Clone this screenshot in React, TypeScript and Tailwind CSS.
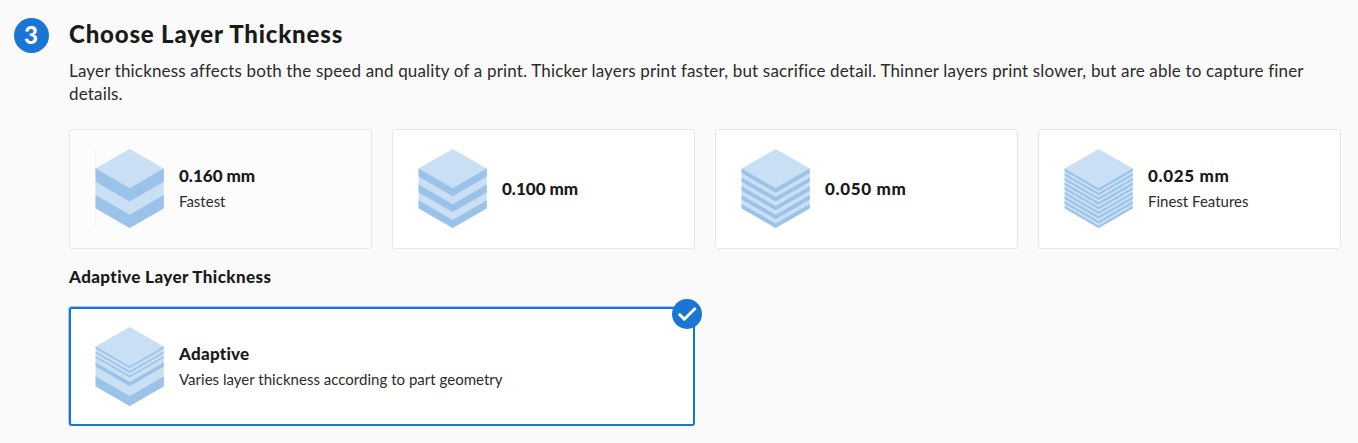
import React from "react";

type Band = [number, number];

function LayerIcon({ bands, edge = false }: { bands: Band[]; edge?: boolean }) {
  return (
    <svg width="70" height="80" viewBox="0 0 70 80" className="shrink-0" aria-hidden="true">
      {edge && <path d="M0 0 H0.8 V79 H0 Z" fill="#f1f1f1" />}
      <path d="M34.7 0 L68.8 19.6 V59.4 L34.7 79 L0.6 59.4 V19.6 Z" fill="#c9dff3" />
      {bands.map(([a, b]) => (
        <path
          key={a}
          fill="#9bc3ea"
          d={`M0.6 ${19.6 + a} L34.7 ${39.3 + a} L68.8 ${19.6 + a} V${19.6 + b} L34.7 ${39.3 + b} L0.6 ${19.6 + b} Z`}
        />
      ))}
    </svg>
  );
}

function evenBands(dark: number): Band[] {
  const step = 39.7 / (dark * 2 - 1);
  return Array.from({ length: dark }, (_, i): Band => [i * 2 * step, (i * 2 + 1) * step]);
}

const options = [
  { label: "0.160 mm", note: "Fastest", bands: evenBands(2), labelClass: "tracking-normal", card: "bg-[#fcfcfc]" },
  { label: "0.100 mm", note: "", bands: evenBands(3), labelClass: "tracking-normal", card: "bg-white" },
  { label: "0.050 mm", note: "", bands: evenBands(5), labelClass: "tracking-[0.65px]", card: "bg-white" },
  { label: "0.025 mm", note: "Finest Features", bands: evenBands(9), labelClass: "tracking-[0.65px]", card: "bg-white" },
];

const adaptiveBands: Band[] = [[0, 1.8], [4.8, 6.6], [9.4, 11.2], [15.8, 20], [29.8, 39.7]];

export default function App() {
  return (
    <main className="flex h-[443px] w-[1358px] bg-[#fafafa] font-['Lato',sans-serif] text-[#1a1a1a] [font-variant-ligatures:none]">
      <div className="mt-[17.5px] ml-[13.5px] flex size-[35px] shrink-0 items-center justify-center rounded-full bg-[#1976d5] pb-px text-2xl font-black text-white">
        3
      </div>
      <section className="ml-[20.5px] w-[1272px] pt-[18px]">
        <h2 className="text-2xl leading-8 font-black tracking-[0.82px]">Choose Layer Thickness</h2>
        <p className="mt-[9px] text-[17px] leading-[23px] tracking-[0.17px] whitespace-nowrap text-[#2b2b2b]">
          Layer thickness affects both the speed and quality of a print. Thicker layers print faster, but sacrifice detail. Thinner layers print slower, but are able to capture finer
          <br />
          details.
        </p>
        <div className="mt-6 grid grid-cols-4 gap-5">
          {options.map((o) => (
            <div key={o.label} className={`flex h-[120px] items-center rounded-[3px] border border-[#e8e8e8] pl-[25px] ${o.card}`}>
              <LayerIcon bands={o.bands} edge={o.note === "Fastest"} />
              <div className={o.note ? "ml-[14px] pb-[2px]" : "ml-[14px]"}>
                <div className={`text-[17px] leading-[26px] font-black ${o.labelClass}`}>{o.label}</div>
                {o.note && <div className="text-[15px] leading-[25px] text-[#2b2b2b]">{o.note}</div>}
              </div>
            </div>
          ))}
        </div>
        <h3 className="mt-[15px] text-[17px] leading-[26px] font-black tracking-[0.4px]">Adaptive Layer Thickness</h3>
        <div className="relative mt-[17px] flex h-[119px] w-[626px] items-center rounded-[3px] border-2 border-[#1976d5] bg-white pl-[24px] shadow-[-0.5px_-0.5px_0_0.5px_#1976d560]">
          <LayerIcon bands={adaptiveBands} />
          <div className="ml-[14px]">
            <div className="text-[17px] leading-[26px] font-black tracking-[0.25px]">Adaptive</div>
            <div className="text-[15px] leading-[25px] tracking-[0.02px] text-[#2b2b2b]">Varies layer thickness according to part geometry</div>
          </div>
          <svg className="absolute -top-[10px] -right-[9px]" width="30" height="30" viewBox="0 0 30 30" aria-hidden="true">
            <circle cx="15" cy="15" r="15" fill="#1976d5" />
            <path d="M6.8 14.7 L12.3 20.2 L23.6 8.9" fill="none" stroke="#fff" strokeWidth="2.8" />
          </svg>
        </div>
      </section>
    </main>
  );
}
